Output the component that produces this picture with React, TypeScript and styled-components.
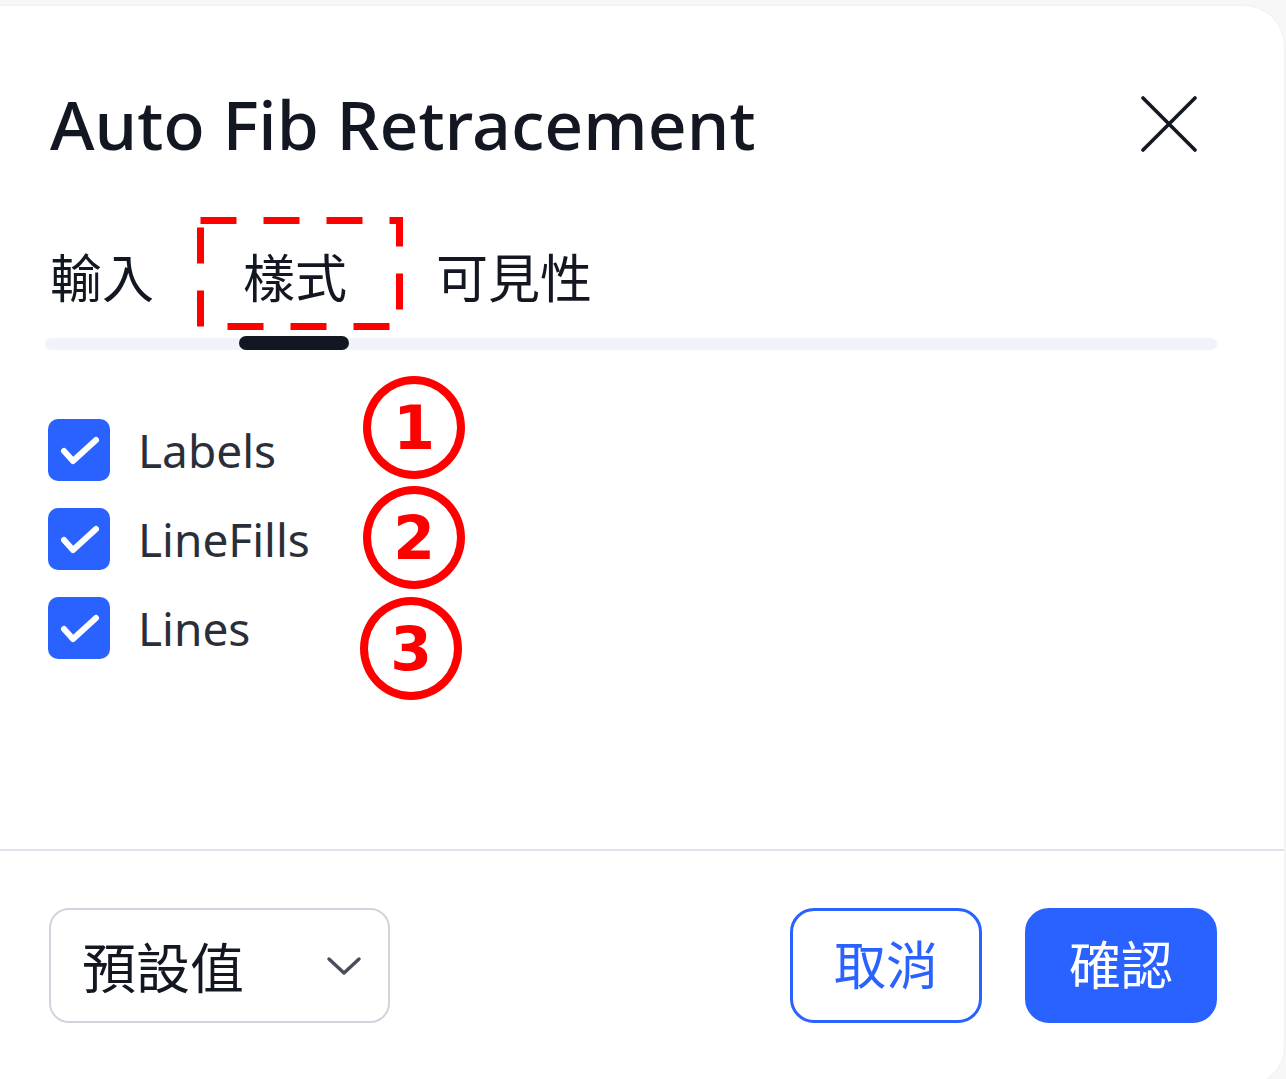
import React from 'react'
import styled, { createGlobalStyle } from 'styled-components'

const GlobalStyle = createGlobalStyle`
  html, body {
    margin: 0;
    padding: 0;
    background: #f7f7f8;
    overflow: hidden;
  }
  body {
    font-family: 'Noto Sans', 'Noto Sans CJK TC', sans-serif;
    color: #131722;
  }
`

const cjk = `'Noto Sans CJK TC', 'Noto Sans', sans-serif`

const Card = styled.div`
  position: relative;
  box-sizing: border-box;
  margin-top: 6px;
  width: 1284px;
  height: 1080px;
  background: #fff;
  border-radius: 0 40px 40px 0;
  box-shadow: 0 0 3px rgba(0, 0, 0, 0.06);
  display: flex;
  flex-direction: column;
  padding-top: 71px;
`

const Body = styled.div`
  padding: 0 67px 0 50px;
  flex: 1;
`

const Header = styled.div`
  display: flex;
  align-items: center;
  justify-content: space-between;
`

const Title = styled.h1`
  margin: 0;
  font-family: 'Noto Sans', sans-serif;
  font-size: 68px;
  font-weight: 500;
  line-height: normal;
  color: #131722;
`

const CloseButton = styled.button`
  border: 0;
  background: none;
  padding: 0;
  margin-right: 20px;
  width: 56px;
  height: 56px;
  display: flex;
  align-items: center;
  justify-content: center;
  color: #131722;
`

const TabBar = styled.div`
  position: relative;
  display: flex;
  gap: 89px;
  margin-top: 76px;
  &::before {
    content: '';
    position: absolute;
    left: -5px;
    right: 0;
    bottom: 0;
    height: 12px;
    border-radius: 6px;
    background: #f0f3fa;
  }
`

const Tab = styled.div<{ $active?: boolean }>`
  position: relative;
  font-family: ${cjk};
  font-size: 52px;
  line-height: 60px;
  padding-bottom: 44px;
  color: #131722;
  &::after {
    content: '';
    display: ${p => (p.$active ? 'block' : 'none')};
    position: absolute;
    left: -4px;
    right: -2px;
    bottom: 0;
    height: 14px;
    border-radius: 7px;
    background: #131722;
  }
`

const DashedMark = styled.svg`
  position: absolute;
  left: -46px;
  top: -29px;
  width: 206px;
  height: 113px;
  overflow: visible;
`

const CheckList = styled.div`
  position: relative;
  display: flex;
  flex-direction: column;
  gap: 27px;
  margin-top: 69px;
  margin-left: -2px;
`

const CheckRow = styled.label`
  display: flex;
  align-items: center;
  gap: 28px;
  height: 62px;
`

const Box = styled.span`
  width: 62px;
  height: 62px;
  border-radius: 10px;
  background: #2962ff;
  display: flex;
  align-items: center;
  justify-content: center;
  flex: none;
`

const CheckLabel = styled.span`
  font-family: 'Noto Sans', sans-serif;
  font-size: 46px;
  color: #2a2e39;
`

const Circled = styled.span<{ $left: number; $top: number }>`
  position: absolute;
  left: ${p => p.$left}px;
  top: ${p => p.$top}px;
  box-sizing: border-box;
  width: 102px;
  height: 103px;
  border: 8px solid #ff0000;
  border-radius: 50%;
  display: flex;
  align-items: center;
  justify-content: center;
  font-family: 'DejaVu Sans', sans-serif;
  font-size: 60px;
  font-weight: 700;
  line-height: 1;
  color: #ff0000;
`

const Footer = styled.div`
  border-top: 2px solid #e0e3eb;
  padding: 57px 67px 0 49px;
  height: 237px;
  box-sizing: border-box;
  display: flex;
  align-items: flex-start;
  gap: 43px;
`

const Select = styled.div`
  box-sizing: border-box;
  width: 341px;
  height: 115px;
  border: 2px solid #d1d4dc;
  border-radius: 20px;
  padding: 0 26px 0 31px;
  display: flex;
  align-items: center;
  justify-content: space-between;
  font-family: ${cjk};
  font-size: 54px;
  color: #131722;
  margin-right: auto;
`

const Button = styled.button<{ $primary?: boolean }>`
  box-sizing: border-box;
  width: 192px;
  height: 115px;
  border-radius: 24px;
  border: 3px solid #2962ff;
  background: ${p => (p.$primary ? '#2962ff' : '#fff')};
  color: ${p => (p.$primary ? '#fff' : '#2962ff')};
  font-family: ${cjk};
  font-size: 52px;
  padding: 0 0 6px;
  display: flex;
  align-items: center;
  justify-content: center;
`

const Check = () => (
  <svg width="62" height="62" viewBox="0 0 62 62">
    <path d="M16 32 L25 42 L48 21" fill="none" stroke="#fff" strokeWidth="6" strokeLinecap="round" strokeLinejoin="round" />
  </svg>
)

const options = [
  { label: 'Labels', n: 1, top: -43 },
  { label: 'LineFills', n: 2, top: -22 },
  { label: 'Lines', n: 3, top: 0 },
]

export default function App() {
  return (
    <>
      <GlobalStyle />
      <Card>
        <Body>
          <Header>
            <Title>Auto Fib Retracement</Title>
            <CloseButton aria-label="close">
              <svg width="56" height="56" viewBox="0 0 56 56">
                <path d="M2 2 L54 54 M54 2 L2 54" stroke="#131722" strokeWidth="3.6" strokeLinecap="round" />
              </svg>
            </CloseButton>
          </Header>

          <TabBar>
            <Tab>輸入</Tab>
            <Tab $active>
              樣式
              <DashedMark viewBox="0 0 206 113">
                <rect x="3.5" y="3.5" width="199" height="106" fill="none" stroke="#ff0000" strokeWidth="7" strokeDasharray="36 27" />
              </DashedMark>
            </Tab>
            <Tab>可見性</Tab>
          </TabBar>

          <CheckList>
            {options.map((o, i) => (
              <CheckRow key={o.label}>
                <Box>
                  <Check />
                </Box>
                <CheckLabel>{o.label}</CheckLabel>
                <Circled $left={315 + (i === 2 ? -3 : 0)} $top={i * 89 + o.top}>
                  {o.n}
                </Circled>
              </CheckRow>
            ))}
          </CheckList>
        </Body>

        <Footer>
          <Select>
            <span>預設值</span>
            <svg width="36" height="22" viewBox="0 0 36 22">
              <path d="M3 4 L18 18 L33 4" fill="none" stroke="#4a4e59" strokeWidth="3.5" strokeLinecap="round" strokeLinejoin="round" />
            </svg>
          </Select>
          <Button>取消</Button>
          <Button $primary>確認</Button>
        </Footer>
      </Card>
    </>
  )
}
